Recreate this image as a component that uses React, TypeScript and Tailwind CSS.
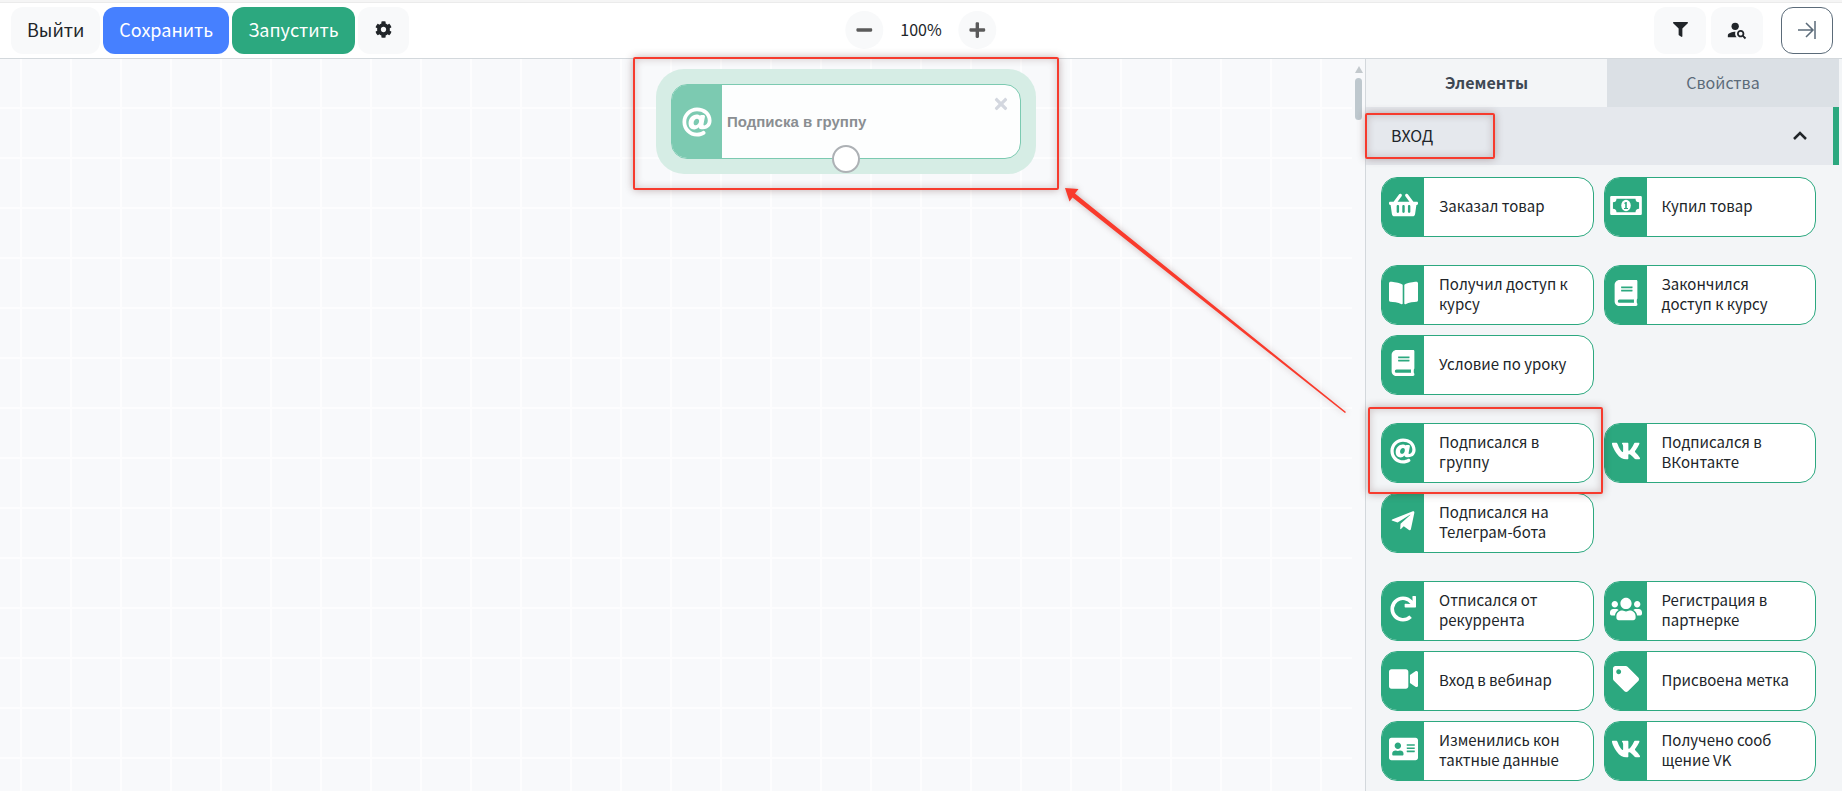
import React, { useState } from 'react';
import {
  FaAddressCard,
  FaAt,
  FaBook,
  FaBookOpen,
  FaCog,
  FaFilter,
  FaMinus,
  FaPlus,
  FaRedo,
  FaShoppingBasket,
  FaTag,
  FaTelegramPlane,
  FaTimes,
  FaUsers,
  FaVideo,
  FaVk,
} from 'react-icons/fa';

interface Item {
  icon: React.ReactNode;
  label: string;
}

const MoneyIcon = () => (
  <svg viewBox="0 0 640 384" fill="currentColor" className="w-8 h-[19px]">
    <path
      fillRule="evenodd"
      d="M24 0h592a24 24 0 0 1 24 24v336a24 24 0 0 1-24 24H24a24 24 0 0 1-24-24V24A24 24 0 0 1 24 0zM128 56a72 72 0 0 1-72 72v128a72 72 0 0 1 72 72h384a72 72 0 0 1 72-72V128a72 72 0 0 1-72-72z"
    />
    <ellipse cx="320" cy="192" rx="96" ry="116" />
    <path d="M288 136l28-16h20v120h24v24h-80v-24h24v-84l-16 6z" fill="#2ca87f" />
  </svg>
);

const PersonSearchIcon = () => (
  <svg viewBox="0 0 24 24" className="w-[22px] h-[22px]" fill="currentColor">
    <circle cx="10" cy="8" r="4" />
    <path d="M10.35 14.01C7.62 13.91 2 15.27 2 18v2h9.54c-2.47-2.76-1.23-5.89-1.19-5.99z" />
    <path d="M19.43 18.02c.36-.59.57-1.28.57-2.02 0-2.21-1.79-4-4-4s-4 1.79-4 4 1.79 4 4 4c.74 0 1.43-.22 2.02-.57L20.59 22 22 20.59l-2.57-2.57zM16 18c-1.1 0-2-.9-2-2s.9-2 2-2 2 .9 2 2-.9 2-2 2z" />
  </svg>
);

const groups: Item[][] = [
  [
    { icon: <FaShoppingBasket className="w-[29px] h-[26px]" />, label: 'Заказал товар' },
    { icon: <MoneyIcon />, label: 'Купил товар' },
  ],
  [
    { icon: <FaBookOpen className="w-[29px] h-[26px]" />, label: 'Получил доступ к курсу' },
    { icon: <FaBook className="w-[26px] h-[26px]" />, label: 'Закончился доступ к курсу' },
    { icon: <FaBook className="w-[26px] h-[26px]" />, label: 'Условие по уроку' },
  ],
  [
    { icon: <FaAt className="w-[26px] h-[26px]" />, label: 'Подписался в группу' },
    { icon: <FaVk className="w-[30px] h-[30px]" />, label: 'Подписался в ВКонтакте' },
    { icon: <FaTelegramPlane className="w-[26px] h-[26px]" />, label: 'Подписался на Телеграм-бота' },
  ],
  [
    { icon: <FaRedo className="w-[26px] h-[26px]" />, label: 'Отписался от рекуррента' },
    { icon: <FaUsers className="w-8 h-[26px]" />, label: 'Регистрация в партнерке' },
    { icon: <FaVideo className="w-[29px] h-[26px]" />, label: 'Вход в вебинар' },
    { icon: <FaTag className="w-[26px] h-[26px]" />, label: 'Присвоена метка' },
    { icon: <FaAddressCard className="w-[29px] h-[26px]" />, label: 'Изменились кон\nтактные данные' },
    { icon: <FaVk className="w-[30px] h-[30px]" />, label: 'Получено сооб\nщение VK' },
  ],
];

const Mark: React.FC<{ className: string }> = ({ className }) => (
  <div
    className={`absolute pointer-events-none z-20 border-2 border-[#f63b2e] rounded-[2px] shadow-[0_0_8px_rgba(60,0,0,0.3),inset_0_0_8px_rgba(60,0,0,0.2)] ${className}`}
  ></div>
);

const ElementCard: React.FC<{ item: Item }> = ({ item }) => (
  <button className="flex h-[60px] overflow-hidden rounded-2xl border border-[#2ca87f] bg-white text-left">
    <span className="flex w-[42px] h-full shrink-0 justify-center items-center pb-1 bg-[#2ca87f] text-white">
      {item.icon}
    </span>
    <span className="self-center pb-0.5 pl-[15px] pr-4 text-[15px] leading-5 whitespace-pre-line text-[#212529]">
      {item.label}
    </span>
  </button>
);

export default function App() {
  const [zoom, setZoom] = useState(100);
  const [open, setOpen] = useState(true);

  return (
    <div className="h-screen flex flex-col overflow-hidden bg-white text-[#212529] font-['Noto_Sans_CJK_SC','Noto_Sans',sans-serif]">
      <div className="h-[3px] shrink-0 bg-[#f5f5f5] border-b border-[#ebebeb]"></div>

      {/* Toolbar */}
      <header className="relative h-14 shrink-0 flex items-center justify-between pl-[11px] pr-[9px] border-b border-[#d3d8dc]">
        <div className="flex gap-[3px] text-lg">
          <button className="h-[47px] px-4 pb-1 rounded-xl bg-[#f8f9fa]">Выйти</button>
          <button className="h-[47px] px-4 pb-1 rounded-xl bg-[#4680ff] text-white">Сохранить</button>
          <button className="h-[47px] px-4 pb-1 rounded-xl bg-[#2ca87f] text-white">Запустить</button>
          <button aria-label="Настройки" className="h-[47px] w-[51px] pb-0.5 rounded-xl bg-[#f8f9fa] flex items-center justify-center">
            <FaCog className="w-[17px] h-[17px]" />
          </button>
        </div>

        <div className="absolute left-1/2 -translate-x-1/2 flex items-center gap-[17px] pb-0.5">
          <button
            aria-label="Уменьшить"
            onClick={() => setZoom(zoom - 10)}
            className="w-[38px] h-[38px] rounded-full bg-[#f8f9fa] text-[#5b5b5b] flex items-center justify-center"
          >
            <FaMinus className="w-[18px] h-[18px]" />
          </button>
          <span className="text-base pb-0.5">{zoom}%</span>
          <button
            aria-label="Увеличить"
            onClick={() => setZoom(zoom + 10)}
            className="w-[38px] h-[38px] rounded-full bg-[#f8f9fa] text-[#5b5b5b] flex items-center justify-center"
          >
            <FaPlus className="w-[18px] h-[18px]" />
          </button>
        </div>

        <div className="flex gap-[5px]">
          <button aria-label="Фильтр" className="h-[47px] w-[52px] pb-0.5 rounded-xl bg-[#f8f9fa] flex items-center justify-center">
            <FaFilter className="w-[15px] h-[15px]" />
          </button>
          <button aria-label="Поиск" className="h-[47px] w-[52px] pb-0.5 rounded-xl bg-[#f8f9fa] flex items-center justify-center">
            <PersonSearchIcon />
          </button>
          <button
            aria-label="Свернуть"
            className="h-[47px] w-[52px] pb-0.5 ml-[13px] rounded-xl border border-[#5b6b79] text-[#5b6b79] flex items-center justify-center"
          >
            <svg viewBox="0 0 18 18" className="w-[18px] h-[18px]" fill="none" stroke="currentColor" strokeWidth="1.5">
              <path d="M0 9h15M8 2l7 7-7 7M17 0v18" />
            </svg>
          </button>
        </div>
      </header>

      <div className="flex flex-1 min-h-0">
        {/* Canvas */}
        <main className="relative flex-1 flex bg-[#f8f9fb]">
          <div className="relative flex-1 bg-[linear-gradient(to_right,#fdfdfe_2px,transparent_2px),linear-gradient(to_bottom,#fdfdfe_2px,transparent_2px)] bg-[size:50px_50px] bg-[position:20px_48px]">
            <div className="absolute left-[656px] top-[10px] w-[380px] h-[105px] p-[15px] rounded-[28px] bg-[#d6ede5]">
              <div className="relative flex h-full overflow-hidden rounded-2xl border border-[#7ccab1] bg-[#fdfefe]">
                <div className="w-[50px] flex items-center justify-center bg-[#7ccab1] text-white">
                  <FaAt className="w-[30px] h-[30px]" />
                </div>
                <span className="self-center pl-[5px] pt-0.5 text-[15px] font-bold text-[#8a8e92] font-['Liberation_Sans',Arial,sans-serif]">
                  Подписка в группу
                </span>
                <button aria-label="Удалить" className="absolute right-[10px] top-[10px] text-[#d3d7df]">
                  <FaTimes className="w-[18px] h-[18px]" />
                </button>
              </div>
              <div className="absolute left-1/2 -translate-x-1/2 bottom-[1px] w-7 h-7 rounded-full border-2 border-[#adb1b5] bg-white"></div>
            </div>
          </div>

          <div className="w-[13px] flex flex-col items-center gap-[5px] pt-[7px]">
            <div className="border-x-4 border-x-transparent border-b-[7px] border-b-[#c3c9cd]"></div>
            <div className="w-[7px] h-[42px] rounded-full bg-[#bec8ce]"></div>
          </div>

          <Mark className="left-[633px] -top-[2px] w-[426px] h-[133px]" />
          <svg viewBox="0 0 281 225" className="absolute left-[1065px] top-[129px] w-[281px] h-[225px] z-20 drop-shadow-[0_0_3px_rgba(60,0,0,0.3)]">
            <path d="M0 0l13.500 1-3.500 4.500L281 224l-1 1L7.500 9.500 4.500 13.500z" fill="#f93a2c" />
          </svg>
        </main>

        {/* Side panel */}
        <aside className="relative w-[477px] shrink-0 flex flex-col pr-[3px] border-l border-[#d3d8dc] bg-[#f3f5f7]">
          <div className="flex h-12 shrink-0 text-base">
            <button className="w-[241px] pb-0.5 font-bold text-[#3e4853]">Элементы</button>
            <button className="flex-1 pb-0.5 bg-[#dbe0e5] text-[#5b6b79]">Свойства</button>
          </div>
          <button
            onClick={() => setOpen(!open)}
            className="relative flex h-[58px] shrink-0 items-center justify-between pl-[25px] pr-[26px] pb-0.5 bg-[#e5e8ed] border-r-[6px] border-[#2ca87f] text-base"
          >
            ВХОД
            <svg viewBox="0 0 14 9" className="w-[14px] h-[9px]" fill="none" stroke="currentColor" strokeWidth="2.500">
              <path d="M1 8l6-6 6 6" />
            </svg>
            <Mark className="-left-px top-[6px] w-[130px] h-[46px]" />
          </button>
          {open && (
            <div className="relative flex flex-col gap-7 pt-3 pl-[15px] pr-[23px]">
              {groups.map((group, i) => (
                <div key={i} className="grid grid-cols-2 gap-[10px]">
                  {group.map((item) => (
                    <ElementCard key={item.label} item={item} />
                  ))}
                </div>
              ))}
              <Mark className="left-[2px] top-[242px] w-[235px] h-[87px]" />
            </div>
          )}
        </aside>
      </div>
    </div>
  );
}
